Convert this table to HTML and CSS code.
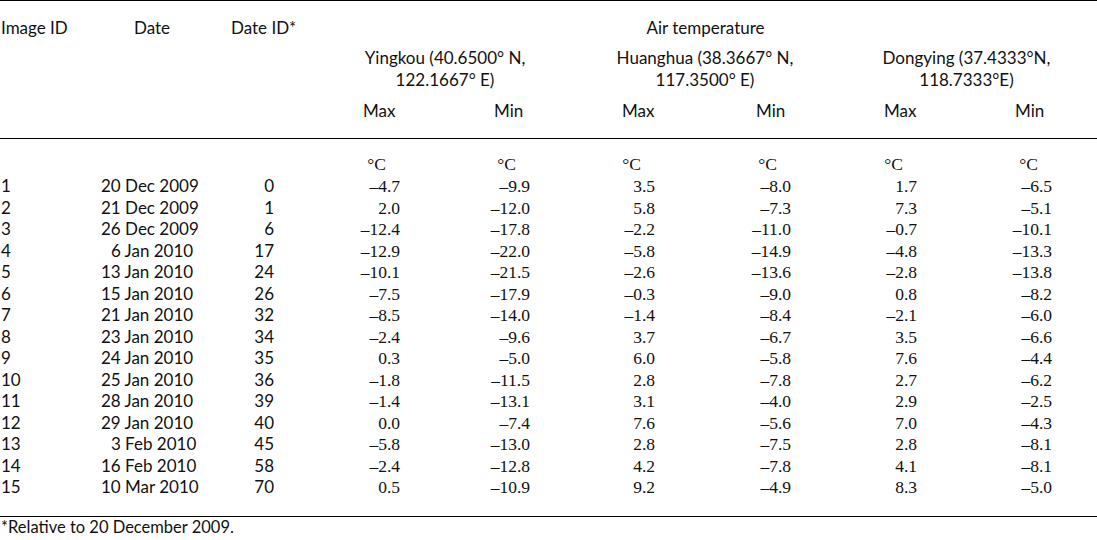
FILE: index.html
```html
<!DOCTYPE html>
<html>
<head>
<meta charset="utf-8">
<title>Air temperature</title>
<link rel="stylesheet" href="styles.css">
</head>
<body>
<table class="tbl">
<colgroup>
<col class="w1"><col class="w2"><col class="w3"><col class="w4"><col class="w5"><col class="w6"><col class="w7"><col class="w8"><col class="w9">
</colgroup>
<thead>
<tr>
<th rowspan="3" class="hd h-c1 rb">Image ID</th>
<th rowspan="3" class="hd h-c2 rb">Date</th>
<th rowspan="3" class="hd h-c3 rb">Date ID*</th>
<th colspan="6" class="air">Air temperature</th>
</tr>
<tr>
<th colspan="2" class="st st-y">Yingkou (40.6500° N,<br>122.1667° E)</th>
<th colspan="2" class="st st-h">Huanghua (38.3667° N,<br>117.3500° E)</th>
<th colspan="2" class="st st-d">Dongying (37.4333°N,<br>118.7333°E)</th>
</tr>
<tr>
<th class="mm rb m4">Max</th>
<th class="mm rb m5">Min</th>
<th class="mm rb m6">Max</th>
<th class="mm rb m7">Min</th>
<th class="mm rb m8">Max</th>
<th class="mm rb m9">Min</th>
</tr>
</thead>
<tbody>
<tr class="units">
<td></td><td></td><td></td>
<td class="n d4">°C</td><td class="n d5">°C</td><td class="n d6">°C</td><td class="n d7">°C</td><td class="n d8">°C</td><td class="n d9">°C</td>
</tr>
<tr><td class="c1">1</td><td class="c2">20 Dec 2009</td><td class="c3">0</td><td class="n c4">–4.7</td><td class="n c5">–9.9</td><td class="n c6">3.5</td><td class="n c7">–8.0</td><td class="n c8">1.7</td><td class="n c9">–6.5</td></tr>
<tr><td class="c1">2</td><td class="c2">21 Dec 2009</td><td class="c3">1</td><td class="n c4">2.0</td><td class="n c5">–12.0</td><td class="n c6">5.8</td><td class="n c7">–7.3</td><td class="n c8">7.3</td><td class="n c9">–5.1</td></tr>
<tr><td class="c1">3</td><td class="c2">26 Dec 2009</td><td class="c3">6</td><td class="n c4">–12.4</td><td class="n c5">–17.8</td><td class="n c6">–2.2</td><td class="n c7">–11.0</td><td class="n c8">–0.7</td><td class="n c9">–10.1</td></tr>
<tr><td class="c1">4</td><td class="c2"><span class="ph">0</span>6 Jan 2010</td><td class="c3">17</td><td class="n c4">–12.9</td><td class="n c5">–22.0</td><td class="n c6">–5.8</td><td class="n c7">–14.9</td><td class="n c8">–4.8</td><td class="n c9">–13.3</td></tr>
<tr><td class="c1">5</td><td class="c2">13 Jan 2010</td><td class="c3">24</td><td class="n c4">–10.1</td><td class="n c5">–21.5</td><td class="n c6">–2.6</td><td class="n c7">–13.6</td><td class="n c8">–2.8</td><td class="n c9">–13.8</td></tr>
<tr><td class="c1">6</td><td class="c2">15 Jan 2010</td><td class="c3">26</td><td class="n c4">–7.5</td><td class="n c5">–17.9</td><td class="n c6">–0.3</td><td class="n c7">–9.0</td><td class="n c8">0.8</td><td class="n c9">–8.2</td></tr>
<tr><td class="c1">7</td><td class="c2">21 Jan 2010</td><td class="c3">32</td><td class="n c4">–8.5</td><td class="n c5">–14.0</td><td class="n c6">–1.4</td><td class="n c7">–8.4</td><td class="n c8">–2.1</td><td class="n c9">–6.0</td></tr>
<tr><td class="c1">8</td><td class="c2">23 Jan 2010</td><td class="c3">34</td><td class="n c4">–2.4</td><td class="n c5">–9.6</td><td class="n c6">3.7</td><td class="n c7">–6.7</td><td class="n c8">3.5</td><td class="n c9">–6.6</td></tr>
<tr><td class="c1">9</td><td class="c2">24 Jan 2010</td><td class="c3">35</td><td class="n c4">0.3</td><td class="n c5">–5.0</td><td class="n c6">6.0</td><td class="n c7">–5.8</td><td class="n c8">7.6</td><td class="n c9">–4.4</td></tr>
<tr><td class="c1">10</td><td class="c2">25 Jan 2010</td><td class="c3">36</td><td class="n c4">–1.8</td><td class="n c5">–11.5</td><td class="n c6">2.8</td><td class="n c7">–7.8</td><td class="n c8">2.7</td><td class="n c9">–6.2</td></tr>
<tr><td class="c1">11</td><td class="c2">28 Jan 2010</td><td class="c3">39</td><td class="n c4">–1.4</td><td class="n c5">–13.1</td><td class="n c6">3.1</td><td class="n c7">–4.0</td><td class="n c8">2.9</td><td class="n c9">–2.5</td></tr>
<tr><td class="c1">12</td><td class="c2">29 Jan 2010</td><td class="c3">40</td><td class="n c4">0.0</td><td class="n c5">–7.4</td><td class="n c6">7.6</td><td class="n c7">–5.6</td><td class="n c8">7.0</td><td class="n c9">–4.3</td></tr>
<tr><td class="c1">13</td><td class="c2"><span class="ph">0</span>3 Feb 2010</td><td class="c3">45</td><td class="n c4">–5.8</td><td class="n c5">–13.0</td><td class="n c6">2.8</td><td class="n c7">–7.5</td><td class="n c8">2.8</td><td class="n c9">–8.1</td></tr>
<tr><td class="c1">14</td><td class="c2">16 Feb 2010</td><td class="c3">58</td><td class="n c4">–2.4</td><td class="n c5">–12.8</td><td class="n c6">4.2</td><td class="n c7">–7.8</td><td class="n c8">4.1</td><td class="n c9">–8.1</td></tr>
<tr class="last"><td class="c1">15</td><td class="c2">10 Mar 2010</td><td class="c3">70</td><td class="n c4">0.5</td><td class="n c5">–10.9</td><td class="n c6">9.2</td><td class="n c7">–4.9</td><td class="n c8">8.3</td><td class="n c9">–5.0</td></tr>
</tbody>
</table>
<p class="note">*Relative to 20 December 2009.</p>
</body>
</html>
```

FILE: styles.css
```css
html, body {
  margin: 0;
  padding: 0;
  background: #ffffff;
}

body {
  color: #111111;
  font-family: Lato, "Open Sans", sans-serif;
  font-size: 17px;
  line-height: 21.5px;
}

.tbl {
  width: 1097px;
  table-layout: fixed;
  border-collapse: separate;
  border-spacing: 0;
  border-top: 1px solid #000;
}

.w1 { width: 95px; }
.w2 { width: 120px; }
.w3 { width: 105px; }
.w4 { width: 130px; }
.w5 { width: 130px; }
.w6 { width: 125px; }
.w7 { width: 135px; }
.w8 { width: 125px; }
.w9 { width: 132px; }

th,
td {
  padding: 0;
  font-weight: normal;
  vertical-align: top;
  white-space: nowrap;
  line-height: 21.5px;
}

.rb { border-bottom: 1px solid #000; }

.hd { text-align: left; padding-top: 15.5px; }
.h-c1 { padding-left: 1px; }
.h-c2 { padding-left: 39px; }
.h-c3 { padding-left: 16px; }

.air {
  text-align: center;
  padding-top: 15.5px;
  padding-right: 6px;
}

.st {
  text-align: center;
  padding-top: 8.5px;
  line-height: 22px;
}
.st-y { padding-right: 10px; }
.st-h { padding-right: 10px; }
.st-d { padding-right: 4px; }

.mm {
  text-align: left;
  padding-top: 9px;
  padding-bottom: 17px;
}
.m4 { padding-left: 43px; }
.m5 { padding-left: 44px; }
.m6 { padding-left: 42px; }
.m7 { padding-left: 51px; }
.m8 { padding-left: 44px; }
.m9 { padding-left: 50px; }

.n {
  font-family: "Liberation Serif", "Times New Roman", serif;
  font-size: 17.5px;
  text-align: right;
  padding-top: 1px;
  line-height: 20.5px;
}

.units td { padding-top: 14.5px; padding-bottom: 1px; }
.units .d4 { padding-right: 64px; }
.units .d5 { padding-right: 64px; }
.units .d6 { padding-right: 64px; }
.units .d7 { padding-right: 63px; }
.units .d8 { padding-right: 62px; }
.units .d9 { padding-right: 59px; }

.c1 { padding-left: 1px; text-align: left; }
.c2 { padding-left: 6px; text-align: left; }
.c3 { padding-right: 46px; text-align: right; }
.c4 { padding-right: 50px; }
.c5 { padding-right: 50px; }
.c6 { padding-right: 50px; }
.c7 { padding-right: 49px; }
.c8 { padding-right: 48px; }
.c9 { padding-right: 45px; }

.ph { visibility: hidden; }

.last td {
  padding-bottom: 18px;
  border-bottom: 1px solid #000;
}

.note {
  margin: 0;
  padding-left: 1px;
  font-size: 16.5px;
  line-height: 21.5px;
}
```
